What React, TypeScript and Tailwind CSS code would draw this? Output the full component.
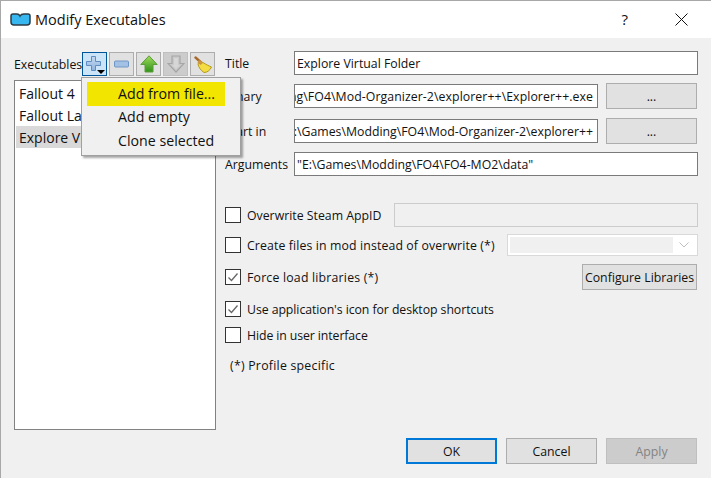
const FONT = "font-['Open_Sans','Noto_Sans',sans-serif]";

function TextInput({ value, end, muted, wide }: { value?: string; end?: boolean; muted?: boolean; wide?: boolean }) {
  return (
    <div className={`flex-1 h-6 min-w-0 pt-[2px] border flex items-center overflow-hidden whitespace-nowrap ${muted ? "bg-[#f0f0f0] border-[#cccccc]" : "bg-white border-[#7a7a7a]"} ${end ? "justify-end pr-1" : "pl-[2px]"} ${wide ? "tracking-[0.07px]" : ""}`}>
      <span className="shrink-0">{value}</span>
    </div>
  );
}

function Btn({ children, className = "" }: { children: React.ReactNode; className?: string }) {
  return (
    <div className={`h-[26px] pt-[2px] shrink-0 border bg-[#e1e1e1] border-[#adadad] flex items-center justify-center ${className}`}>{children}</div>
  );
}

function Check({ checked }: { checked?: boolean }) {
  return (
    <div className="w-4 h-4 shrink-0 border border-[#333333] bg-white flex items-center justify-center">
      {checked && (
        <svg width="12" height="12" viewBox="0 0 12 12">
          <path d="M1.5 6.5 L4.5 9.5 L10.5 2.5" fill="none" stroke="#666666" strokeWidth="1.3" />
        </svg>
      )}
    </div>
  );
}

function ToolBtn({ children, hot, off }: { children: React.ReactNode; hot?: boolean; off?: boolean }) {
  const c = hot ? "bg-[#cce4f7] border-[#005499]" : off ? "bg-[#cccccc] border-[#bfbfbf]" : "bg-[#e1e1e1] border-[#adadad]";
  return <div className={`relative w-[25px] h-6 border flex items-center justify-center ${c}`}>{children}</div>;
}

function Plus() {
  return (
    <svg width="15" height="15" viewBox="0 0 15 15" className="-ml-[3px] -mt-[2px]">
      <defs>
        <linearGradient id="b" x1="0" y1="0" x2="0" y2="1">
          <stop offset="0" stopColor="#c5d9f0" />
          <stop offset="1" stopColor="#8fb3de" />
        </linearGradient>
      </defs>
      <path d="M5.5 0.5h4v5h5v4h-5v5h-4v-5h-5v-4h5z" fill="url(#b)" stroke="#5f8dc2" strokeWidth="1" />
    </svg>
  );
}

function Minus() {
  return (
    <svg width="15" height="8" viewBox="0 0 15 8">
      <rect x="0.5" y="1" width="14" height="6" rx="1" fill="#a3c1e4" stroke="#7097c4" strokeWidth="1" />
    </svg>
  );
}

function UpArrow() {
  return (
    <svg width="18" height="18" viewBox="0 0 18 18">
      <defs>
        <linearGradient id="g" x1="0" y1="0" x2="0" y2="1">
          <stop offset="0" stopColor="#9fdc5c" />
          <stop offset="1" stopColor="#2f9318" />
        </linearGradient>
      </defs>
      <path d="M9 0.8 L17.2 9.5 H13 V17 H5 V9.5 H0.8 Z" fill="url(#g)" stroke="#5d9c3a" strokeWidth="1" />
    </svg>
  );
}

function DownArrow() {
  return (
    <svg width="18" height="18" viewBox="0 0 18 18">
      <path d="M5 1 H13 V8.5 H17 L9 17 L1 8.5 H5 Z" fill="#c9c9c9" stroke="#a6a6a6" strokeWidth="1.2" />
      <path d="M7 3 H11 V10 H13 L9 14 L5 10 H7 Z" fill="#d6d6d6" />
    </svg>
  );
}

function Broom() {
  return (
    <svg width="18" height="17" viewBox="0 0 18 17">
      <path d="M1.5 1.5 L6.5 6" stroke="#a8692a" strokeWidth="2.4" strokeLinecap="round" />
      <path d="M5.5 5 L9 6.5 C12 8.5 15 10 17.5 11 C16 14.5 13 16.5 10 16.5 C7 14.5 4.5 11.5 4 8 Z" fill="#f4dc45" stroke="#b39a1e" strokeWidth="1" />
      <path d="M5 4 L9 7 L6.5 9 L3.5 6.5 Z" fill="#cf9440" />
    </svg>
  );
}

export default function App() {
  return (
    <div className={`${FONT} w-[711px] h-[478px] flex flex-col overflow-hidden bg-[#f0f0f0] text-[12.3px] text-[#111111] border-l border-t border-[#a8a8a8]`}>
      <div className="h-[37px] shrink-0 bg-white flex items-center pl-[9px]">
        <svg width="21" height="13" viewBox="0 0 21 13">
          <path d="M1 3 Q1 1 3 1 H7 Q9 1 10 3 Q11 1 14 1 H18 Q20 1 20 3 V9 Q20 12 17 12 H4 Q1 12 1 9 Z" fill="#38b6ef" stroke="#2d3b45" strokeWidth="1.5" />
        </svg>
        <span className="ml-[4px] text-[14.5px]">Modify Executables</span>
        <span className="ml-auto text-[15px] mr-[47px]">?</span>
        <svg width="13" height="13" viewBox="0 0 13 13" className="mr-[23px]">
          <path d="M0.5 0.5 L12.5 12.5 M12.5 0.5 L0.5 12.5" stroke="#111111" strokeWidth="1" />
        </svg>
      </div>

      <div className="flex flex-1 min-h-0 pl-[13px] pt-[13px]">
        <div className="w-[202px] shrink-0 flex flex-col">
          <div className="relative h-6 mt-px flex items-center">
            <span className="w-[68px] pt-[2px]">Executables</span>
            <div className="flex gap-[2px]">
              <ToolBtn hot>
                <Plus />
                <span className="absolute right-[1px] bottom-[1px] w-0 h-0 border-l-[4px] border-r-[4px] border-t-[4px] border-l-transparent border-r-transparent border-t-black" />
              </ToolBtn>
              <ToolBtn><Minus /></ToolBtn>
              <ToolBtn><UpArrow /></ToolBtn>
              <ToolBtn off><DownArrow /></ToolBtn>
              <ToolBtn><Broom /></ToolBtn>
            </div>
            <div className="absolute z-10 left-[67px] top-[25px] w-[160px] border border-[#a0a0a0] bg-[#f0f0f0] pt-1 pl-[5px] pr-[15px] pb-px text-[14.2px] shadow-[2px_2px_2px_rgba(0,0,0,0.35)]">
              <div className="h-6 pl-[31px] flex items-center bg-[#f2e600] whitespace-nowrap">Add from file...</div>
              <div className="h-6 pl-[31px] pb-[2px] flex items-center whitespace-nowrap">Add empty</div>
              <div className="h-6 pl-[31px] pb-[2px] flex items-center whitespace-nowrap">Clone selected</div>
            </div>
          </div>
          <div className="flex-1 mt-1 bg-white border border-[#828282] p-px text-[14px]">
            <div className="h-[22px] pl-[3px] flex items-center">Fallout 4</div>
            <div className="h-[22px] pl-[3px] flex items-center">Fallout Launcher</div>
            <div className="h-[22px] pl-[3px] flex items-center bg-[#d9d9d9]">Explore Virtual Folder</div>
          </div>
        </div>

        <div className="w-[473px] shrink-0 ml-[9px] flex flex-col">
          <div className="flex items-center h-6">
            <span className="w-[69px] pt-[2px] shrink-0">Title</span>
            <TextInput value="Explore Virtual Folder" />
          </div>
          <div className="flex items-center h-[26px] mt-2">
            <span className="w-[69px] pt-[2px] shrink-0">Binary</span>
            <TextInput end wide value="E:\Games\Modding\FO4\Mod-Organizer-2\explorer++\Explorer++.exe" />
            <Btn className="w-[91px] ml-2 mr-px">...</Btn>
          </div>
          <div className="flex items-center h-[26px] mt-[9px]">
            <span className="w-[69px] pt-[2px] shrink-0">Start in</span>
            <TextInput end value="E:\Games\Modding\FO4\Mod-Organizer-2\explorer++" />
            <Btn className="w-[91px] ml-2 mr-px">...</Btn>
          </div>
          <div className="flex items-center h-6 mt-2">
            <span className="w-[69px] pt-[2px] shrink-0">Arguments</span>
            <TextInput value={'"E:\\Games\\Modding\\FO4\\FO4-MO2\\data"'} />
          </div>

          <div className="flex items-center h-6 mt-[27px]">
            <Check />
            <span className="ml-[6px] pt-[2px] w-[147px] shrink-0 whitespace-nowrap">Overwrite Steam AppID</span>
            <TextInput muted />
          </div>
          <div className="flex items-center h-[22px] mt-[7px]">
            <Check />
            <span className="ml-[6px] pt-[2px] w-[260px] shrink-0 whitespace-nowrap tracking-[0.12px]">Create files in mod instead of overwrite (*)</span>
            <div className="flex-1 h-[22px] border border-[#d9d9d9] bg-white flex items-center p-[2px]">
              <div className="flex-1 h-full bg-[#f0f0f0]" />
              <svg width="22" height="10" viewBox="0 0 22 10">
                <path d="M6.5 2.5 L11 7 L15.5 2.5" fill="none" stroke="#bfbfbf" strokeWidth="1" />
              </svg>
            </div>
          </div>
          <div className="flex items-center h-[26px] mt-2">
            <Check checked />
            <span className="ml-[6px] pt-[2px] tracking-[0.2px]">Force load libraries (*)</span>
            <Btn className="w-[115px] ml-auto mr-px">Configure Libraries</Btn>
          </div>
          <div className="flex items-center h-4 mt-[11px]">
            <Check checked />
            <span className="ml-[6px] pt-[2px] tracking-[-0.07px]">Use application's icon for desktop shortcuts</span>
          </div>
          <div className="flex items-center h-4 mt-[10px]">
            <Check />
            <span className="ml-[6px] pt-[2px] tracking-[-0.1px]">Hide in user interface</span>
          </div>
          <div className="h-[18px] mt-[13px] pl-[5px] pt-[2px] tracking-[0.25px] flex items-center">(*) Profile specific</div>
        </div>
      </div>

      <div className="shrink-0 flex justify-end gap-[9px] pt-2 pb-[14px] pr-[14px]">
        <Btn className="w-[91px] border-2 !border-[#0078d7]">OK</Btn>
        <Btn className="w-[91px]">Cancel</Btn>
        <Btn className="w-[91px] !bg-[#cccccc] !border-[#bfbfbf] text-[#838383]">Apply</Btn>
      </div>
    </div>
  );
}
